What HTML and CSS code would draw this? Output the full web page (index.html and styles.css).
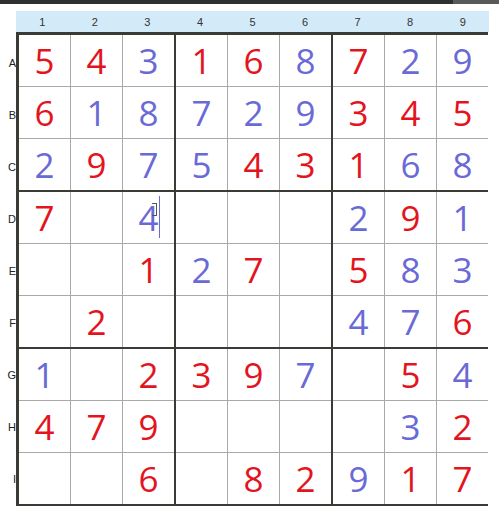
FILE: index.html
```html
<!DOCTYPE html>
<html>
<head>
<meta charset="utf-8">
<link rel="stylesheet" href="styles.css">
</head>
<body>
<div class="topbar"><div class="topbar-right"></div></div>
<div class="board">
  <div class="colhead">
    <span>1</span><span>2</span><span>3</span><span>4</span><span>5</span><span>6</span><span>7</span><span>8</span><span>9</span>
  </div>
  <div class="main">
    <div class="rowlabels">
      <span>A</span><span>B</span><span>C</span><span>D</span><span>E</span><span>F</span><span>G</span><span>H</span><span>I</span>
    </div>
    <div class="grid" id="grid"></div>
  </div>
</div>
<script src="app.js"></script>
</body>
</html>
```
FILE: styles.css
```css
html, body { margin: 0; padding: 0; background: #fff; }
body { width: 499px; height: 506px; overflow: hidden; font-family: "Liberation Sans", Arial, sans-serif; }
.topbar { height: 4px; background: #303030; display: flex; justify-content: flex-end; }
.topbar-right { width: 46px; background: #5a5a5a; }
.board { padding: 7px 0 0 16px; }
.colhead {
  width: 473px; height: 21px;
  display: grid; grid-template-columns: repeat(9, 1fr);
  background: #d3eaf8;
  font-size: 11px; color: #333; line-height: 21px;
}
.colhead span { text-align: center; padding-top: 1px; }
.main { display: flex; margin-left: -16px; }
.rowlabels { width: 16px; display: flex; flex-direction: column; padding-top: 5px; }
.rowlabels span { height: 52px; line-height: 52px; text-align: right; font-size: 11px; color: #222; }
.grid {
  width: 466px; border: 3px solid #3b3b36;
  background: #3b3b36;
  display: grid; grid-template-columns: repeat(3, 1fr); gap: 2px;
}
.box { display: grid; grid-template-columns: repeat(3, 51px); grid-auto-rows: 51px; gap: 1px; background: #a9a9a9; }
.cell {
  background: #fff; display: flex; align-items: center; justify-content: center;
  font-family: "Open Sans", sans-serif; font-size: 35px; line-height: 1; position: relative;
}
.r { color: #e3141d; }
.b { color: #6a6ad6; }
.caret { position: absolute; left: 36px; top: 4px; width: 1px; height: 42px; background: #6a6ad6; }
.ibeam { position: absolute; left: 29px; top: 11px; width: 4px; height: 11px; border: 1px solid #555; border-left: none; }
```
FILE: app.js
```js
const data = [
  "5r4r3b1r6r8b7r2b9b",
  "6r1b8b7b2b9b3r4r5r",
  "2b9r7b5b4r3r1r6b8b",
  "7r..4b......2b9r1b",
  "....1r2b7r..5r8b3b",
  "..2r........4b7b6r",
  "1b..2r3r9r7b..5r4b",
  "4r7r9r........3b2r",
  "....6r..8r2r9b1r7r"
];
const grid = document.getElementById('grid');
for (let br = 0; br < 3; br++) {
  for (let bc = 0; bc < 3; bc++) {
    const box = document.createElement('div');
    box.className = 'box';
    for (let r = 0; r < 3; r++) {
      for (let c = 0; c < 3; c++) {
        const R = br * 3 + r, C = bc * 3 + c;
        const s = data[R].substr(C * 2, 2);
        const cell = document.createElement('div');
        cell.className = 'cell';
        if (s[0] !== '.') {
          cell.textContent = s[0];
          cell.classList.add(s[1]);
        }
        if (R === 3 && C === 2) {
          const ib = document.createElement('span'); ib.className = 'ibeam'; cell.appendChild(ib);
          const ca = document.createElement('span'); ca.className = 'caret'; cell.appendChild(ca);
        }
        box.appendChild(cell);
      }
    }
    grid.appendChild(box);
  }
}
```
